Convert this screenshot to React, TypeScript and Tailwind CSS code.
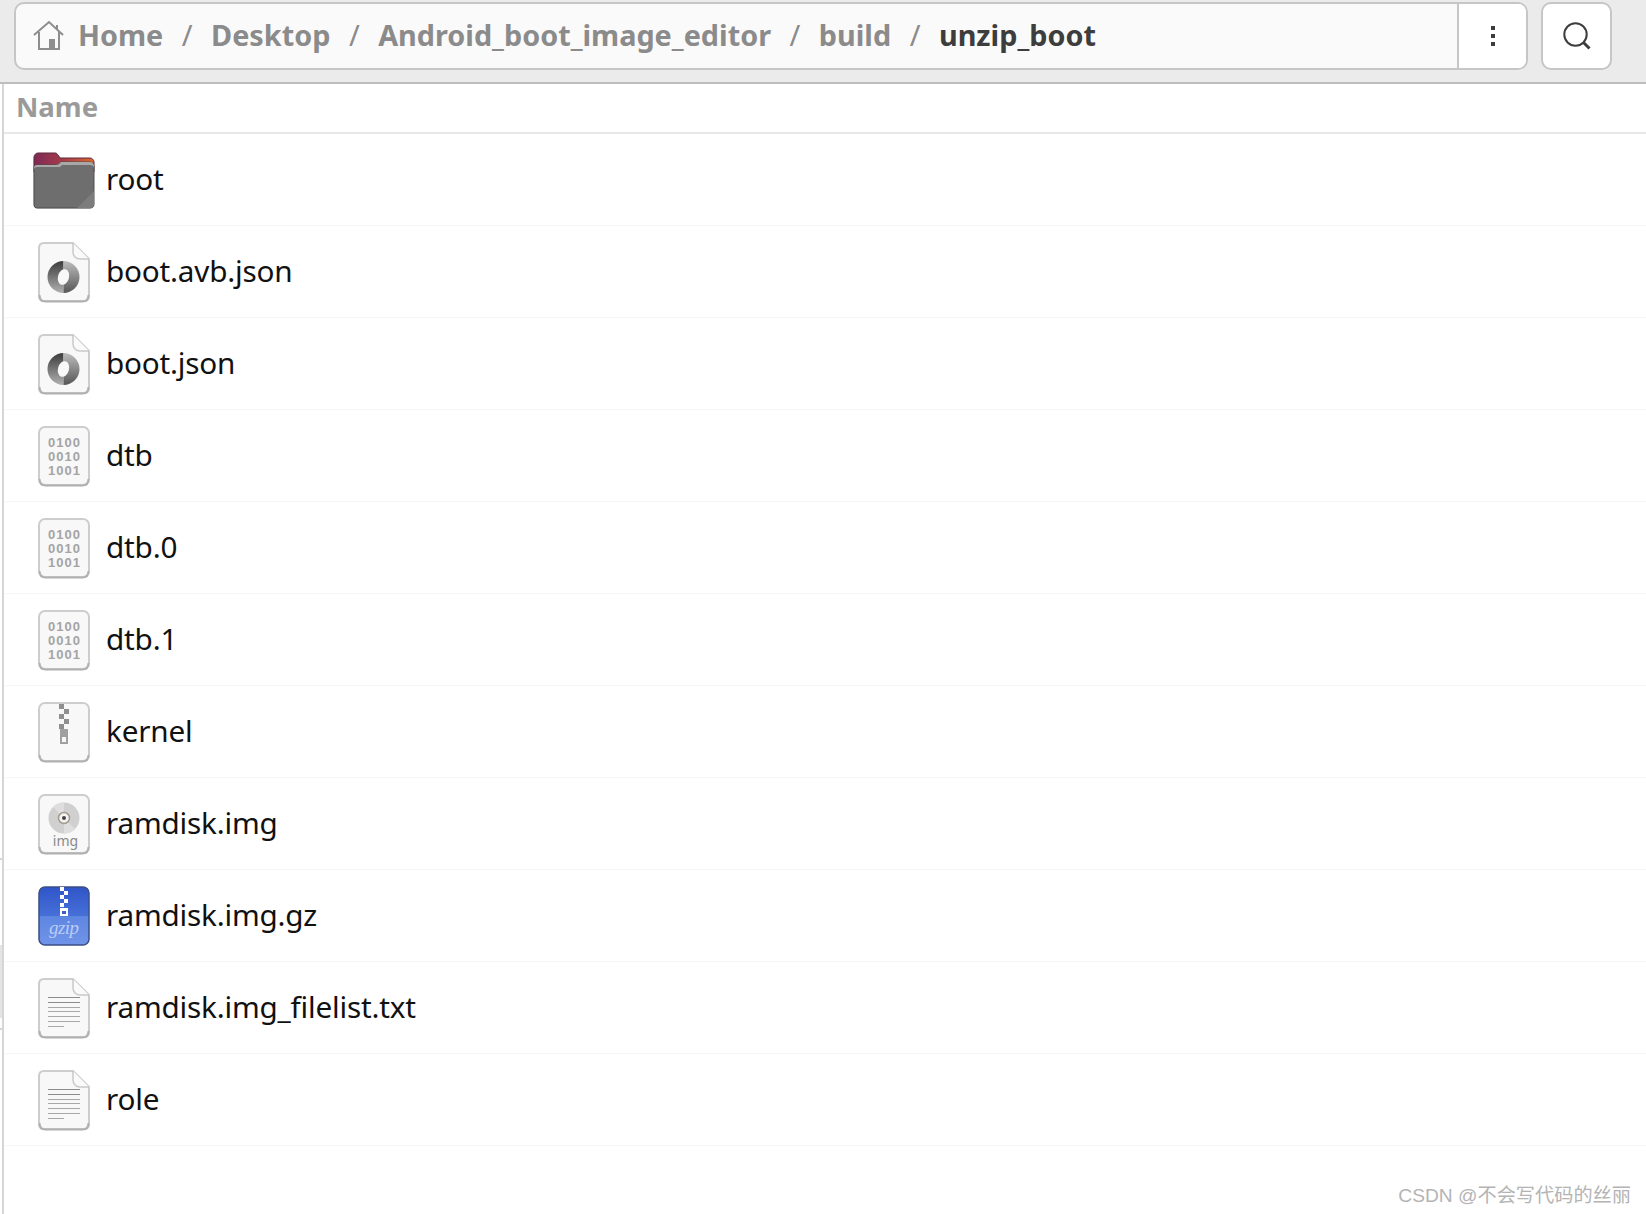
import React from 'react'

const uiFont = '[font-family:"Noto_Sans","Open_Sans",sans-serif]'

/* icons */
const HomeIcon = () => (
  <svg width="32" height="30" viewBox="0 0 32 30" fill="none" stroke="#8d8d8d" strokeWidth="2">
    <path d="M1 15 16 2l14 13" />
    <path d="M6 12v17h20V12" />
    <path d="M24 5v5" />
    <path d="M16 29V19h6v10z" fill="#8d8d8d" stroke="none" />
  </svg>
)

const SearchIcon = () => (
  <svg width="30" height="30" viewBox="0 0 30 30" fill="none" stroke="#3d3d3d">
    <circle cx="13.5" cy="13.5" r="11.2" strokeWidth="2" />
    <path d="m21.5 21.5 6 6" strokeWidth="3" />
  </svg>
)

const Dots = () => (
  <div className="flex flex-col gap-[4px]">
    <span className="w-[4px] h-[4px] bg-[#3d3d3d]" />
    <span className="w-[4px] h-[4px] bg-[#3d3d3d]" />
    <span className="w-[4px] h-[4px] bg-[#3d3d3d]" />
  </div>
)

const FolderIcon = () => (
  <svg className="mt-[2px]" width="66" height="60" viewBox="0 0 66 60">
    <defs>
      <linearGradient id="tab" x1="0" x2="1" y1="0" y2="0">
        <stop offset="0" stopColor="#7f2a55" />
        <stop offset="0.45" stopColor="#a23a4a" />
        <stop offset="1" stopColor="#e0682c" />
      </linearGradient>
    </defs>
    <path d="M7 3h17c2 0 2 1 3 2l2 2h28c3 0 5 2 5 5v40c0 3-2 5-5 5H7c-3 0-5-2-5-5V8c0-3 2-5 5-5z" fill="#5a5a5a" opacity="0.2" transform="translate(0 1)" />
    <path d="M7 2h17c2 0 2 1 3 2l2 3h30c2 0 4 2 4 4v10H3V6c0-2 2-4 4-4z" fill="url(#tab)" stroke="#5c2a3f" strokeWidth="1" />
    <path d="M6 14h19c2 0 3-1 4-2l1-1h29c2 0 4 2 4 4v38c0 3-2 4-4 4H7c-3 0-4-1-4-4V17c0-2 1-3 3-3z" fill="#6e6e6e" stroke="#4f4f4f" strokeWidth="1" />
    <path d="M6 14h19c2 0 3-1 4-2l1-1h29c2 0 4 2 4 4v2c0-2-2-3-4-3H31l-2 2H6c-2 0-3 1-3 3v-2c0-2 1-3 3-3z" fill="#a8a8a8" />
    <path d="M63 40v13c0 2-2 4-4 4H46z" fill="#7c7c7c" />
  </svg>
)

const Sheet = ({ fold, children }: { fold?: boolean; children?: React.ReactNode }) => (
  <svg width="52" height="62" viewBox="0 0 52 62">
    {fold ? (
      <>
        <path d="M6 2h29l16 16v37c0 3-2 5-5 5H6c-3 0-5-2-5-5V7c0-3 2-5 5-5z" fill="#f8f8f8" stroke="#cdcdcd" strokeWidth="2" />
        <path d="M35 2v9c0 4 3 7 7 7h9" fill="#fafafa" stroke="#c9c9c9" strokeWidth="1.5" />
      </>
    ) : (
      <rect x="1" y="2" width="50" height="58" rx="6" fill="#f8f8f8" stroke="#cdcdcd" strokeWidth="2" />
    )}
    <path d="M1.500 54c0 4 2 6.500 6 6.500h37c4 0 6-2.500 6-6.500" fill="none" stroke="#b0b0b0" strokeWidth="2" />
    {children}
  </svg>
)

const JsonIcon = () => (
  <Sheet fold>
    <defs>
      <linearGradient id="jl" x1="0" x2="0" y1="0" y2="1">
        <stop offset="0" stopColor="#3c3c3c" />
        <stop offset="1" stopColor="#b0b0b0" />
      </linearGradient>
      <linearGradient id="jr" x1="0" x2="0" y1="0" y2="1">
        <stop offset="0" stopColor="#bdbdbd" />
        <stop offset="1" stopColor="#565656" />
      </linearGradient>
    </defs>
    <path d="M25.500 20a16 16 0 0 0 0 32z" fill="url(#jl)" />
    <path d="M25.500 20a16 16 0 0 1 0 32z" fill="url(#jr)" />
    <ellipse cx="25.500" cy="36" rx="5.500" ry="8" fill="#f8f8f8" transform="rotate(15 25.500 36)" />
  </Sheet>
)

const BinaryIcon = () => (
  <Sheet>
    <g fontFamily="'Liberation Sans', sans-serif" fontWeight="700" fontSize="13" fill="#a4a4a4" textAnchor="middle">
      <text x="26" y="22" textLength="32" lengthAdjust="spacing">0100</text>
      <text x="26" y="36" textLength="32" lengthAdjust="spacing">0010</text>
      <text x="26" y="50" textLength="32" lengthAdjust="spacing">1001</text>
    </g>
  </Sheet>
)

const ZipIcon = () => (
  <Sheet>
    <g fill="#8f8f8f">
      <rect x="21" y="3" width="5" height="5" />
      <rect x="26" y="8" width="5" height="5" />
      <rect x="21" y="13" width="5" height="5" />
      <rect x="26" y="18" width="5" height="5" />
      <rect x="21" y="23" width="5" height="5" />
      <rect x="22" y="28" width="8" height="15" fill="#a0a0a0" />
      <rect x="24" y="36" width="4" height="5" fill="#f8f8f8" />
    </g>
  </Sheet>
)

const DiscIcon = () => (
  <Sheet>
    <circle cx="26" cy="25" r="15.500" fill="#d0d0d0" />
    <path d="M26 25 15 14a15.500 15.500 0 0 1 11-4.500z" fill="#dedede" />
    <path d="M26 25l11 11a15.500 15.500 0 0 1-11 4.500z" fill="#dedede" />
    <circle cx="26" cy="25" r="5.500" fill="#f4f4f4" stroke="#a39a8c" strokeWidth="1.500" />
    <circle cx="26" cy="25" r="2" fill="#444" />
    <text x="27.500" y="53" textAnchor="middle" fontFamily="'Noto Sans', sans-serif" fontSize="14" fill="#8a8a8a">img</text>
  </Sheet>
)

const GzipIcon = () => (
  <svg width="52" height="62" viewBox="0 0 52 62">
    <defs>
      <linearGradient id="gz" x1="0" x2="0" y1="0" y2="1">
        <stop offset="0" stopColor="#2f55c8" />
        <stop offset="0.5" stopColor="#4770d8" />
        <stop offset="0.51" stopColor="#5f86e2" />
        <stop offset="1" stopColor="#6f94e8" />
      </linearGradient>
    </defs>
    <rect x="1" y="2" width="50" height="58" rx="6" fill="url(#gz)" stroke="#3a4f86" strokeWidth="1.500" />
    <g fill="#ffffff">
      <rect x="22" y="2" width="4" height="4" />
      <rect x="26" y="6" width="4" height="4" />
      <rect x="22" y="10" width="4" height="4" />
      <rect x="26" y="14" width="4" height="4" />
      <rect x="22" y="18" width="4" height="4" />
      <rect x="22" y="23" width="8" height="8" />
      <rect x="24" y="26" width="4" height="3" fill="#3a5fcc" />
    </g>
    <text x="26" y="49" textAnchor="middle" fontFamily="'Liberation Serif', serif" fontStyle="italic" fontSize="19" textLength="30" fill="#b9ccf5">gzip</text>
  </svg>
)

const TextIcon = () => (
  <Sheet fold>
    <g stroke="#a8a8a8" strokeWidth="1">
      <path d="M10 20.500h32" stroke="#8c8c8c" />
      <path d="M10 25.500h32" stroke="#8c8c8c" />
      <path d="M10 30.500h32" />
      <path d="M10 34.500h32" />
      <path d="M10 39.500h32" />
      <path d="M10 44.500h32" />
      <path d="M10 49.500h16" />
    </g>
  </Sheet>
)

const crumbs = ['Home', 'Desktop', 'Android_boot_image_editor', 'build']

const files = [
  { name: 'root', icon: <FolderIcon /> },
  { name: 'boot.avb.json', icon: <JsonIcon /> },
  { name: 'boot.json', icon: <JsonIcon /> },
  { name: 'dtb', icon: <BinaryIcon /> },
  { name: 'dtb.0', icon: <BinaryIcon /> },
  { name: 'dtb.1', icon: <BinaryIcon /> },
  { name: 'kernel', icon: <ZipIcon /> },
  { name: 'ramdisk.img', icon: <DiscIcon /> },
  { name: 'ramdisk.img.gz', icon: <GzipIcon /> },
  { name: 'ramdisk.img_filelist.txt', icon: <TextIcon /> },
  { name: 'role', icon: <TextIcon /> },
]

const App = () => {
  return (
    <div className={`relative w-[1646px] h-[1214px] overflow-hidden bg-white ${uiFont}`}>
      {/* path bar */}
      <div className="flex items-start gap-[13px] h-[84px] pt-[2px] pl-[14px] bg-[#ebebeb] border-b-2 border-[#bdbdbd]">
        <div className="flex w-[1514px] h-[68px] rounded-[10px] border-2 border-[#c6c6c6] bg-[#fafafa] overflow-hidden">
          <div className="flex flex-1 items-center pl-[17px] pb-[2px]">
            <HomeIcon />
            {crumbs.map((c, i) => (
              <React.Fragment key={c}>
                <span className={`text-[28.800px] font-bold text-[#8b8b8b] ${i === 0 ? 'ml-[13px]' : ''}`}>{c}</span>
                <span className="mx-[18.500px] text-[29px] text-[#8b8b8b]">/</span>
              </React.Fragment>
            ))}
            <span className="text-[28.800px] font-bold text-[#3d3d3d]">unzip_boot</span>
          </div>
          <div className="flex items-center justify-center w-[69px] bg-white border-l-2 border-[#c6c6c6]">
            <Dots />
          </div>
        </div>
        <div className="flex items-center justify-center w-[71px] h-[68px] rounded-[10px] border-2 border-[#c6c6c6] bg-white">
          <SearchIcon />
        </div>
      </div>

      {/* list */}
      <div className="ml-[2px] h-[1130px] border-l-2 border-[#d6d6d6]">
        <div className="flex items-center h-[50px] pl-[12px] pb-[2px] border-b-2 border-[#e8e8e8] text-[27.500px] font-bold text-[#9a9a9a]">
          Name
        </div>
        {files.map((f) => (
          <div key={f.name} className="flex items-center h-[92px] border-b border-[#f6f6f6]">
            <div className="flex items-center justify-center w-[110px] pr-[8px] pl-[18px]">{f.icon}</div>
            <span className="-ml-[8px] text-[29.700px] tracking-[-0.2px] text-[#111111]">{f.name}</span>
          </div>
        ))}
      </div>

      {/* marks on the window edge */}
      <div className="absolute left-0 top-[858px] w-[2px] h-[2px] bg-[#d6d6d6]" />
      <div className="absolute left-0 top-[945px] w-[2px] h-[73px] bg-[#e4e4e4]" />
      <div className="absolute left-0 top-[1028px] w-[2px] h-[2px] bg-[#d6d6d6]" />

      {/* watermark */}
      <div className='absolute right-[15px] bottom-[3px] text-[19.200px] text-[#b4b4b4] [font-family:"Liberation_Sans","Noto_Sans_CJK_SC",sans-serif]'>
        CSDN @不会写代码的丝丽
      </div>
    </div>
  )
}

export default App
